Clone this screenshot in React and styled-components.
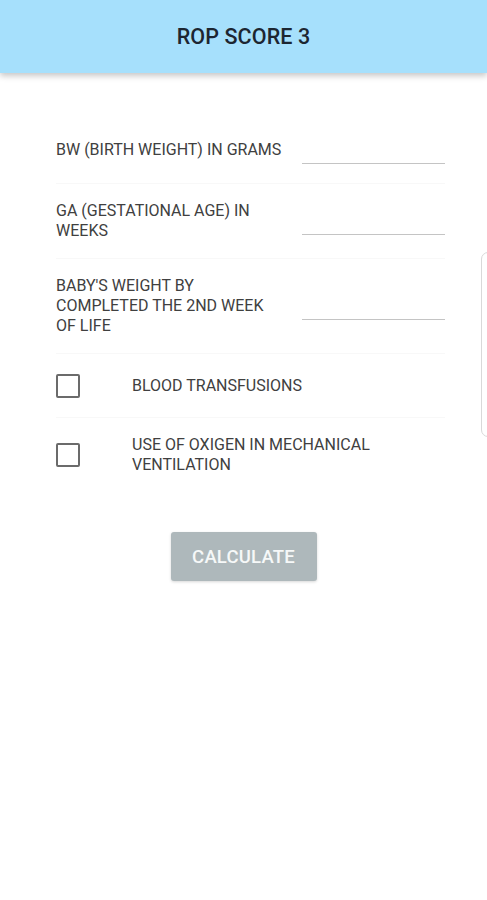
import React, { useState } from 'react';
import styled, { createGlobalStyle } from 'styled-components';

//Styles
const GlobalStyle = createGlobalStyle`
  html, body {
    margin: 0;
    padding: 0;
    background: #ffffff;
    font-family: Roboto, 'Noto Sans', sans-serif;
  }
`;

const StyledPage = styled.div`
  position: relative;
  width: 487px;
  min-height: 900px;
  background: #ffffff;
  overflow: hidden;
`;

const StyledHeader = styled.header`
  display: flex;
  align-items: center;
  justify-content: center;
  height: 73px;
  background: #a6e0fc;
  box-shadow: 0px 3px 6px rgba(0, 0, 0, 0.22);
  position: relative;
  z-index: 1;
`;

const StyledTitle = styled.h1`
  margin: 0;
  font-family: Roboto, sans-serif;
  font-weight: 500;
  font-size: 21.5px;
  color: #1c2631;
  letter-spacing: 0.1px;
`;

const StyledForm = styled.form`
  display: flex;
  flex-direction: column;
  padding-top: 44px;
`;

const StyledFieldList = styled.div`
  display: flex;
  flex-direction: column;
  margin: 0 42px 0 56px;
`;

const StyledRow = styled.div`
  display: flex;
  align-items: center;
  padding: 17px 0;
  min-height: ${(props) => (props.check ? '29px' : '32px')};
  border-bottom: 1px solid ${(props) => (props.last ? 'transparent' : '#f8f8f8')};
`;

const StyledLabel = styled.label`
  width: ${(props) => props.width || '229px'};
  font-family: Roboto, sans-serif;
  font-size: 16px;
  line-height: 20px;
  color: #404040;
  text-transform: uppercase;
`;

const StyledInput = styled.input`
  margin-left: auto;
  width: 143px;
  height: 28px;
  box-sizing: border-box;
  border: none;
  border-bottom: 1px solid #c4c4c4;
  background: transparent;
  font-family: Roboto, sans-serif;
  font-size: 15px;
  outline: none;
  padding: 0;
`;

const StyledCheckBox = styled.span`
  display: flex;
  align-items: center;
  width: 76px;
  flex-shrink: 0;
  &::before {
    content: '';
    display: block;
    width: 20px;
    height: 20px;
    border: 2px solid #6b6b6b;
    border-radius: 2px;
    background: ${(props) => (props.checked ? '#6b6b6b' : 'transparent')};
  }
`;

const StyledButtonWrap = styled.div`
  display: flex;
  justify-content: center;
  padding-top: 39px;
`;

const StyledButton = styled.button`
  width: 146px;
  height: 49px;
  border: none;
  border-radius: 3px;
  background: #aeb8bb;
  color: #f6f8f8;
  font-family: Roboto, sans-serif;
  font-weight: 500;
  font-size: 18.5px;
  letter-spacing: 0.2px;
  box-shadow: 0px 1px 3px rgba(0, 0, 0, 0.16);
`;

const StyledDrawerHint = styled.div`
  position: absolute;
  top: 252px;
  left: 481px;
  width: 20px;
  height: 185px;
  box-sizing: border-box;
  border: 1px solid #d9d9d9;
  border-radius: 7px;
`;

const fields = [
  { id: 'bw', text: 'BW (Birth weight) in grams' },
  { id: 'ga', text: 'GA (Gestational age) in weeks' },
  { id: 'bw2', text: "Baby's weight by completed the 2nd week of life" },
];

const checks = [
  { id: 'blood', text: 'Blood transfusions' },
  { id: 'oxigen', text: 'Use of oxigen in mechanical ventilation' },
];

const App = () => {
  // local state
  const [checked, setChecked] = useState({});

  const toggle = (id) => setChecked({ ...checked, [id]: !checked[id] });

  return (
    <StyledPage>
      <GlobalStyle />
      <StyledHeader>
        <StyledTitle>ROP SCORE 3</StyledTitle>
      </StyledHeader>
      <StyledForm onSubmit={(e) => e.preventDefault()}>
        <StyledFieldList>
          {fields.map((item) => (
            <StyledRow key={item.id}>
              <StyledLabel htmlFor={item.id}>{item.text}</StyledLabel>
              <StyledInput id={item.id} type="number" />
            </StyledRow>
          ))}
          {checks.map((item, i) => (
            <StyledRow
              key={item.id}
              check
              last={i === checks.length - 1}
              onClick={() => toggle(item.id)}
            >
              <StyledCheckBox checked={checked[item.id]} />
              <StyledLabel width="260px">{item.text}</StyledLabel>
            </StyledRow>
          ))}
        </StyledFieldList>
        <StyledButtonWrap>
          <StyledButton type="submit">CALCULATE</StyledButton>
        </StyledButtonWrap>
      </StyledForm>
      <StyledDrawerHint />
    </StyledPage>
  );
};

export default App;
